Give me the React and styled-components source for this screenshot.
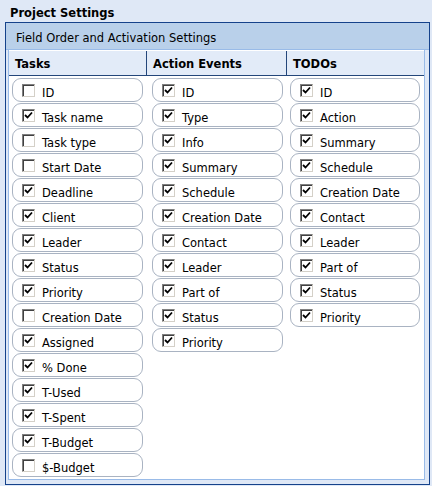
import React from "react";
import styled, { createGlobalStyle } from "styled-components";

const GlobalStyle = createGlobalStyle`
  body {
    margin: 0;
    background: #dfe8f6;
    font-family: "DejaVu Sans", Verdana, sans-serif;
    color: #000;
  }
`;

const Page = styled.div`
  width: 432px;
  height: 486px;
  overflow: hidden;
`;

const Title = styled.div`
  height: 19px;
  padding-top: 3px;
  padding-left: 10px;
  font-size: 11.5px;
  font-weight: bold;
  line-height: 20px;
`;

const Panel = styled.div`
  margin-left: 5px;
  width: 423px;
  border: 1px solid #15428b;
  background: #dfe8f6;
`;

const PanelHeader = styled.div`
  height: 23px;
  padding-top: 3px;
  line-height: 25px;
  padding-left: 10px;
  background: #b9d0ea;
  border-bottom: 1px solid #99bbe8;
  font-size: 11.5px;
`;

const Body = styled.div`
  padding: 0 4px 4px 2px;
`;

const Sheet = styled.div`
  display: grid;
  grid-template-columns: 138px 140px 1fr;
  background: #fff;
  border: 1px solid #99bbe8;
  border-top: none;
  padding-top: 1px;
  padding-bottom: 2px;
`;

const Column = styled.div`
  display: flex;
  flex-direction: column;
`;

const ColumnHead = styled.div`
  height: 24px;
  line-height: 27px;
  padding-left: 6px;
  background: #e2ebf8;
  border-bottom: 1px solid #23467a;
  border-right: ${(p) => (p.$last ? "none" : "1px solid #23467a")};
  font-size: 11.5px;
  font-weight: bold;
`;

const List = styled.div`
  display: flex;
  flex-direction: column;
  gap: 1px;
  padding: 2px 4px 0 ${(p) => p.$pad}px;
`;

const Item = styled.label`
  display: flex;
  align-items: flex-start;
  height: 22px;
  border: 1px solid #a9b3c2;
  border-radius: 9px;
  padding-left: 9px;
  font-size: 11.5px;
`;

const Box = styled.span`
  width: 11px;
  height: 11px;
  margin-top: 5px;
  margin-right: 7px;
  border: 1px solid #808080;
  border-right-color: #d4d0c8;
  border-bottom-color: #d4d0c8;
  box-shadow: inset 1px 1px 0 #404040;
  background: #fff;
  display: flex;
  align-items: center;
  justify-content: center;
  flex-shrink: 0;
`;

const Label = styled.span`
  padding-top: 7px;
  line-height: 14px;
  white-space: nowrap;
`;

const Check = () => (
  <svg width="9" height="9" viewBox="0 0 9 9">
    <path d="M1 4 L3.5 6.5 L8 1.5" fill="none" stroke="#000" strokeWidth="1.8" />
  </svg>
);

const columns = [
  {
    title: "Tasks",
    pad: 3,
    items: [
      ["ID", false],
      ["Task name", true],
      ["Task type", false],
      ["Start Date", false],
      ["Deadline", true],
      ["Client", true],
      ["Leader", true],
      ["Status", true],
      ["Priority", true],
      ["Creation Date", false],
      ["Assigned", true],
      ["% Done", true],
      ["T-Used", true],
      ["T-Spent", true],
      ["T-Budget", true],
      ["$-Budget", false],
    ],
  },
  {
    title: "Action Events",
    pad: 5,
    items: [
      ["ID", true],
      ["Type", true],
      ["Info", true],
      ["Summary", true],
      ["Schedule", true],
      ["Creation Date", true],
      ["Contact", true],
      ["Leader", true],
      ["Part of", true],
      ["Status", true],
      ["Priority", true],
    ],
  },
  {
    title: "TODOs",
    pad: 3,
    items: [
      ["ID", true],
      ["Action", true],
      ["Summary", true],
      ["Schedule", true],
      ["Creation Date", true],
      ["Contact", true],
      ["Leader", true],
      ["Part of", true],
      ["Status", true],
      ["Priority", true],
    ],
  },
];

const App = () => {
  return (
    <Page>
      <GlobalStyle />
      <Title>Project Settings</Title>
      <Panel>
        <PanelHeader>Field Order and Activation Settings</PanelHeader>
        <Body>
          <Sheet>
            {columns.map((col, i) => {
              const last = i === columns.length - 1;
              return (
                <Column key={col.title}>
                  <ColumnHead $last={last}>{col.title}</ColumnHead>
                  <List $pad={col.pad}>
                    {col.items.map(([name, on]) => (
                      <Item key={name}>
                        <Box>{on && <Check />}</Box>
                        <Label>{name}</Label>
                      </Item>
                    ))}
                  </List>
                </Column>
              );
            })}
          </Sheet>
        </Body>
      </Panel>
    </Page>
  );
};

export default App;
